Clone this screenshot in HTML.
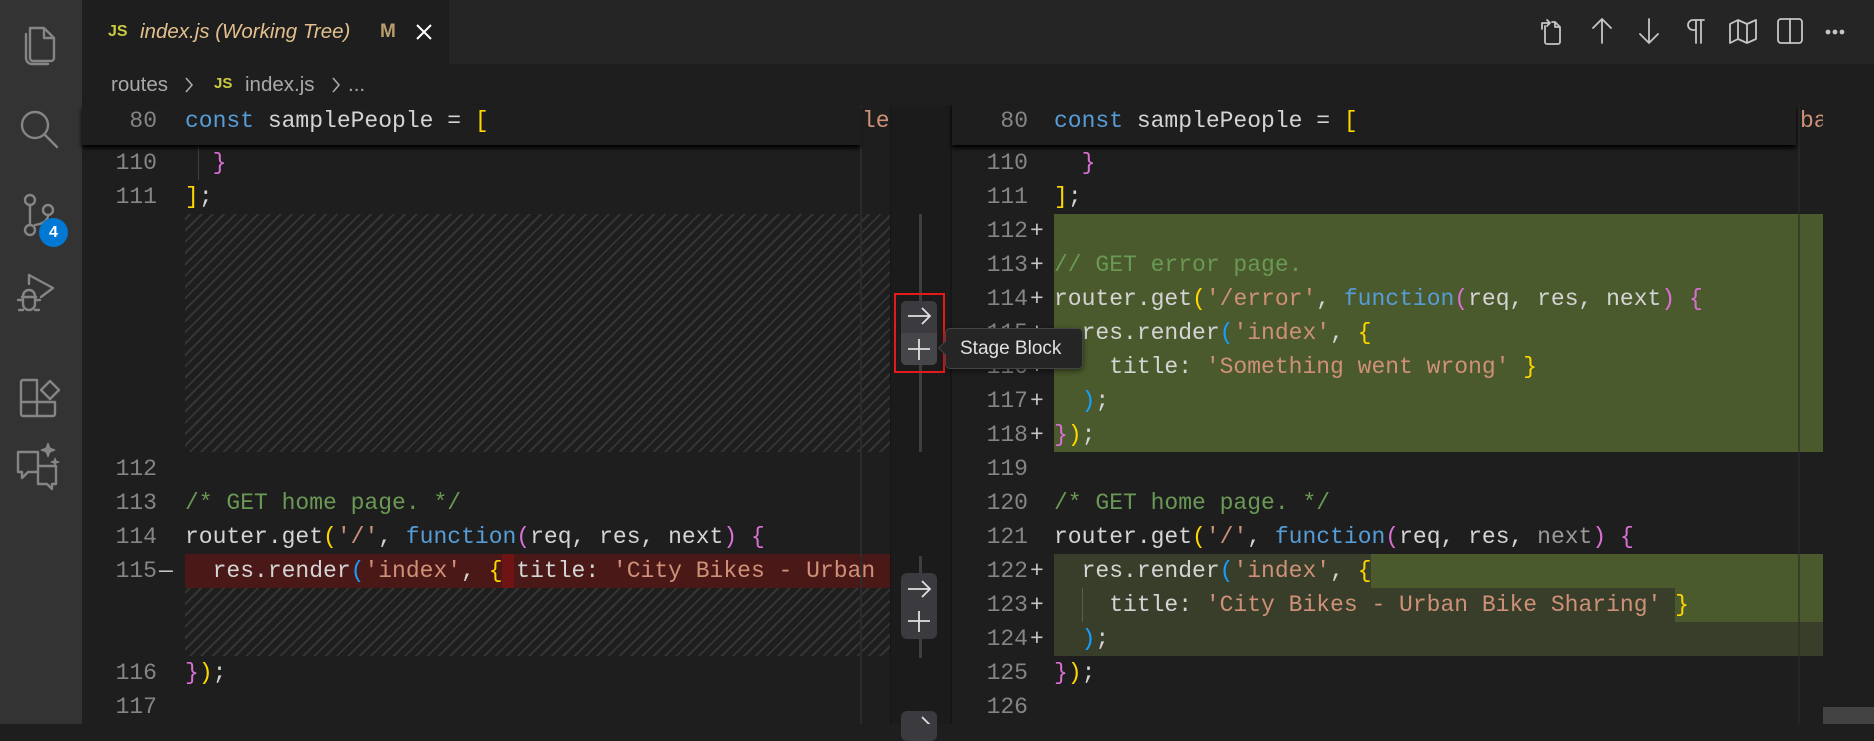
<!DOCTYPE html>
<html><head><meta charset="utf-8"><style>
*{margin:0;padding:0;box-sizing:border-box}
body{width:1874px;height:724px;overflow:hidden;background:#1e1e1e;position:relative;font-family:"Liberation Sans",sans-serif}
.abs{position:absolute}
.code{font-family:"Liberation Mono",monospace;font-size:23px;white-space:pre;line-height:34px;color:#d4d4d4}
.ln{position:absolute;font-family:"Liberation Mono",monospace;font-size:23px;line-height:34px;color:#858585;text-align:right;width:80px}
.kw{color:#569cd6}.s{color:#ce9178}.c{color:#6a9955}.y{color:#ffd700}.p{color:#da70d6}.b{color:#179fff}.g{color:#9a9a9a}
.hatch{background:repeating-linear-gradient(-45deg,#1e1e1e 0 6px,#353535 6px 8px)}
.plus{position:absolute;font-family:"Liberation Mono",monospace;font-size:23px;line-height:34px;color:#c5c5c5}
</style></head><body>
<div class="abs" style="left:0;top:0;width:82px;height:724px;background:#333333"></div>
<svg class="abs" style="left:0;top:0" width="82" height="520" fill="none" stroke="#858585" stroke-width="2.4" stroke-linejoin="round" stroke-linecap="round">
<path d="M30 28h14l10 10v20a3 3 0 0 1-3 3H33a3 3 0 0 1-3-3z M44 28v10h10"/>
<path d="M26 34v24a6 6 0 0 0 6 6h16"/>
<circle cx="35" cy="125" r="13"/><path d="M45 135l12 12"/>
<circle cx="30" cy="200" r="5"/><circle cx="48" cy="210" r="5"/><circle cx="30" cy="230" r="5"/><path d="M30 205v20 M48 215q0 8-13 10"/>
<path d="M29 275l24 13-12 9 M29 275v9"/><path d="M22 297h14 M29 290a6 6 0 0 1 6 6v8a6 6 0 0 1-12 0v-8a6 6 0 0 1 6-6z M18 300h5 M35 300h5 M19 310h4 M35 310h4"/>
<path d="M21 402v-20a2 2 0 0 1 2-2h14v22z M21 402v12a2 2 0 0 0 2 2h14v-14 M37 402h18v12a2 2 0 0 1-2 2H37"/><path d="M41 390l9-9 9 9-9 9z"/>
<path d="M18 452h20v20H28l-6 6v-6h-4z M38 466h18v18h-4v5l-5-5H38z"/><path d="M48 443l2 5 5 2-5 2-2 5-2-5-5-2 5-2z M55 458l1 3 3 1-3 1-1 3-1-3-3-1 3-1z" fill="#858585" stroke-width="1"/>
</svg>
<div class="abs" style="left:39px;top:218px;width:29px;height:29px;border-radius:50%;background:#0078d4;color:#fff;font-weight:bold;font-size:16px;text-align:center;line-height:29px">4</div>
<div class="abs" style="left:82px;top:0;width:1792px;height:64px;background:#252526"></div>
<div class="abs" style="left:82px;top:0;width:367px;height:64px;background:#1e1e1e"></div>
<div class="abs" style="left:108px;top:20px;color:#cbcb41;font-weight:bold;font-size:16px;line-height:24px">JS</div>
<div class="abs" style="left:140px;top:18px;color:#e2c08d;font-style:italic;font-size:20.5px;line-height:28px">index.js (Working Tree)</div>
<div class="abs" style="left:380px;top:18px;color:#b89d6d;font-weight:bold;font-size:19px;line-height:28px">M</div>
<svg class="abs" style="left:414px;top:22px" width="20" height="20" stroke="#fff" stroke-width="2"><path d="M3 3l14 14M17 3L3 17"/></svg>
<svg class="abs" style="left:1530px;top:14px" width="340" height="36" fill="none" stroke="#c5c5c5" stroke-width="1.8" stroke-linejoin="round" stroke-linecap="round">
<path d="M15 12v16a2 2 0 0 0 2 2h11a2 2 0 0 0 2-2V13l-5-5h-3 M25 8v5h5 M12 15V9h8 M17 6l3 3-3 3"/>
<path d="M72 29V6 M63 14l9-9 9 9"/>
<path d="M119 5v23 M110 20l9 9 9-9"/>
<path d="M166 6v23 M171 6v23 M174 6h-11a5 5 0 0 0 0 10h3"/>
<path d="M200 10l8-4 9 4 9-4v19l-9 4-9-4-8 4z M208 6v19 M217 10v19"/>
<rect x="248" y="5" width="24" height="24" rx="3"/><path d="M260 5v24"/>
<circle cx="298" cy="18" r="1.5" fill="#c5c5c5"/><circle cx="305" cy="18" r="1.5" fill="#c5c5c5"/><circle cx="312" cy="18" r="1.5" fill="#c5c5c5"/>
</svg>
<div class="abs" style="left:111px;top:71px;color:#a9a9a9;font-size:20.5px;line-height:28px;white-space:pre">routes</div>
<svg class="abs" style="left:183px;top:75px" width="12" height="20" fill="none" stroke="#a9a9a9" stroke-width="1.6"><path d="M3 3l6 7-6 7"/></svg>
<div class="abs" style="left:214px;top:74px;color:#cbcb41;font-weight:bold;font-size:15px;line-height:20px">JS</div>
<div class="abs" style="left:245px;top:71px;color:#a9a9a9;font-size:20.5px;line-height:28px">index.js</div>
<svg class="abs" style="left:330px;top:75px" width="12" height="20" fill="none" stroke="#a9a9a9" stroke-width="1.6"><path d="M3 3l6 7-6 7"/></svg>
<div class="abs" style="left:348px;top:71px;color:#a9a9a9;font-size:20.5px;line-height:28px">...</div>

<div class="abs hatch" style="left:185px;top:214px;width:705px;height:238px"></div>
<div class="abs hatch" style="left:185px;top:588px;width:705px;height:68px"></div>
<div class="abs" style="left:185px;top:554px;width:705px;height:34px;background:#4b1818"></div>
<div class="abs" style="left:502px;top:554px;width:12px;height:34px;background:#6f1414"></div>
<div class="abs" style="left:860px;top:105px;width:2px;height:619px;background:#2b2b2b"></div>
<div class="ln" style="left:77px;top:146px">110</div><div class="code abs" style="left:185px;top:146px">  <span class="p">}</span></div>
<div class="abs" style="left:198px;top:146px;width:1px;height:34px;background:#404040"></div>
<div class="ln" style="left:77px;top:180px">111</div><div class="code abs" style="left:185px;top:180px"><span class="y">]</span>;</div>
<div class="ln" style="left:77px;top:452px">112</div>
<div class="ln" style="left:77px;top:486px">113</div><div class="code abs" style="left:185px;top:486px"><span class="c">/* GET home page. */</span></div>
<div class="ln" style="left:77px;top:520px">114</div><div class="code abs" style="left:185px;top:520px">router.get<span class="y">(</span><span class="s">'/'</span>, <span class="kw">function</span><span class="p">(</span>req, res, next<span class="p">)</span> <span class="p">{</span></div>
<div class="ln" style="left:77px;top:554px">115</div><div class="plus" style="left:159px;top:554px">—</div>
<div class="code abs" style="left:185px;top:554px;width:700px;overflow:hidden">  res.render<span class="b">(</span><span class="s">'index'</span>, <span class="y">{</span> title: <span class="s">'City Bikes - Urban Bike Sharing'</span></div>
<div class="ln" style="left:77px;top:656px">116</div><div class="code abs" style="left:185px;top:656px"><span class="p">}</span><span class="y">)</span>;</div>
<div class="ln" style="left:77px;top:690px">117</div>
<div class="abs" style="left:82px;top:105px;width:778px;height:40px;background:#1e1e1e;box-shadow:0 3px 4px #000"></div>
<div class="ln" style="left:77px;top:104px">80</div><div class="code abs" style="left:185px;top:104px"><span class="kw">const</span> samplePeople = <span class="y">[</span></div>
<div class="code abs s" style="left:862px;top:104px;width:28px;overflow:hidden">le</div>

<div class="abs" style="left:890px;top:105px;width:62px;height:619px;background:#1b1b1b;border-left:1px solid #151515;border-right:2px solid #161616"></div>
<div class="abs" style="left:919px;top:214px;width:3px;height:238px;background:#3e3e3e"></div>
<div class="abs" style="left:919px;top:556px;width:3px;height:102px;background:#3e3e3e"></div>
<div class="abs" style="left:901px;top:301px;width:36px;height:64px;background:#3a3a3f;border-radius:5px"></div>
<div class="abs" style="left:901px;top:333px;width:36px;height:32px;background:#45454a;border-radius:0 0 5px 5px"></div>
<div class="abs" style="left:894px;top:293px;width:51px;height:80px;border:2px solid #e51b1b"></div>
<div class="abs" style="left:901px;top:573px;width:36px;height:66px;background:#3a3a3f;border-radius:6px"></div>
<div class="abs" style="left:901px;top:711px;width:36px;height:30px;background:#3a3a3f;border-radius:6px"></div>
<svg class="abs" style="left:901px;top:301px" width="36" height="64" fill="none" stroke="#e0e0e0" stroke-width="1.8"><path d="M7 15h22 M21 7l8 8-8 8 M18 38v21 M7 48h22"/></svg>
<svg class="abs" style="left:901px;top:573px" width="36" height="66" fill="none" stroke="#e0e0e0" stroke-width="1.8"><path d="M7 16h22 M21 8l8 8-8 8 M18 38v21 M7 48h22"/></svg>
<svg class="abs" style="left:901px;top:711px" width="36" height="13" fill="none" stroke="#e0e0e0" stroke-width="1.8"><path d="M21 6l8 8"/></svg>

<div class="abs" style="left:1054px;top:214px;width:769px;height:238px;background:#4b5a2c"></div>
<div class="abs" style="left:1054px;top:554px;width:769px;height:102px;background:#393e2a"></div>
<div class="abs" style="left:1371px;top:554px;width:452px;height:34px;background:#4b5a2c"></div>
<div class="abs" style="left:1675px;top:588px;width:148px;height:34px;background:#4b5a2c"></div>
<div class="abs" style="left:1798px;top:105px;width:2px;height:619px;background:#2b2b2b;opacity:.6"></div>
<div class="ln" style="left:948px;top:146px">110</div><div class="code abs" style="left:1054px;top:146px">  <span class="p">}</span></div>
<div class="ln" style="left:948px;top:180px">111</div><div class="code abs" style="left:1054px;top:180px"><span class="y">]</span>;</div>
<div class="ln" style="left:948px;top:214px">112</div>
<div class="ln" style="left:948px;top:248px">113</div><div class="code abs" style="left:1054px;top:248px"><span class="c">// GET error page.</span></div>
<div class="ln" style="left:948px;top:282px">114</div><div class="code abs" style="left:1054px;top:282px">router.get<span class="y">(</span><span class="s">'/error'</span>, <span class="kw">function</span><span class="p">(</span>req, res, next<span class="p">)</span> <span class="p">{</span></div>
<div class="ln" style="left:948px;top:316px">115</div><div class="code abs" style="left:1054px;top:316px">  res.render<span class="b">(</span><span class="s">'index'</span>, <span class="y">{</span></div>
<div class="ln" style="left:948px;top:350px">116</div><div class="code abs" style="left:1054px;top:350px">    title: <span class="s">'Something went wrong'</span> <span class="y">}</span></div>
<div class="ln" style="left:948px;top:384px">117</div><div class="code abs" style="left:1054px;top:384px">  <span class="b">)</span>;</div>
<div class="ln" style="left:948px;top:418px">118</div><div class="code abs" style="left:1054px;top:418px"><span class="p">}</span><span class="y">)</span>;</div>
<div class="ln" style="left:948px;top:452px">119</div>
<div class="ln" style="left:948px;top:486px">120</div><div class="code abs" style="left:1054px;top:486px"><span class="c">/* GET home page. */</span></div>
<div class="ln" style="left:948px;top:520px">121</div><div class="code abs" style="left:1054px;top:520px">router.get<span class="y">(</span><span class="s">'/'</span>, <span class="kw">function</span><span class="p">(</span>req, res, <span class="g">next</span><span class="p">)</span> <span class="p">{</span></div>
<div class="ln" style="left:948px;top:554px">122</div><div class="code abs" style="left:1054px;top:554px">  res.render<span class="b">(</span><span class="s">'index'</span>, <span class="y">{</span></div>
<div class="ln" style="left:948px;top:588px">123</div><div class="code abs" style="left:1054px;top:588px">    title: <span class="s">'City Bikes - Urban Bike Sharing'</span> <span class="y">}</span></div>
<div class="abs" style="left:1082px;top:588px;width:1px;height:34px;background:#5a5f4a"></div>
<div class="ln" style="left:948px;top:622px">124</div><div class="code abs" style="left:1054px;top:622px">  <span class="b">)</span>;</div>
<div class="ln" style="left:948px;top:656px">125</div><div class="code abs" style="left:1054px;top:656px"><span class="p">}</span><span class="y">)</span>;</div>
<div class="ln" style="left:948px;top:690px">126</div>
<div class="plus" style="left:1030px;top:214px">+</div><div class="plus" style="left:1030px;top:248px">+</div><div class="plus" style="left:1030px;top:282px">+</div><div class="plus" style="left:1030px;top:316px">+</div><div class="plus" style="left:1030px;top:350px">+</div><div class="plus" style="left:1030px;top:384px">+</div><div class="plus" style="left:1030px;top:418px">+</div>
<div class="plus" style="left:1030px;top:554px">+</div><div class="plus" style="left:1030px;top:588px">+</div><div class="plus" style="left:1030px;top:622px">+</div>
<div class="abs" style="left:952px;top:105px;width:844px;height:40px;background:#1e1e1e;box-shadow:0 3px 4px #000"></div>
<div class="ln" style="left:948px;top:104px">80</div><div class="code abs" style="left:1054px;top:104px"><span class="kw">const</span> samplePeople = <span class="y">[</span></div>
<div class="code abs s" style="left:1800px;top:104px;width:23px;overflow:hidden">ba</div>
<div class="abs" style="left:1823px;top:707px;width:51px;height:17px;background:#434343"></div>

<div class="abs" style="left:945px;top:328px;width:138px;height:41px;background:#252526;border:1px solid #454545;border-radius:5px;color:#e0e0e0;font-size:19px;line-height:39px;padding-left:14px;box-shadow:0 2px 6px rgba(0,0,0,.5)">Stage Block</div>
<div class="abs" style="left:940px;top:343px;width:10px;height:10px;background:#252526;border-left:1px solid #454545;border-bottom:1px solid #454545;transform:rotate(45deg)"></div>
</body></html>
